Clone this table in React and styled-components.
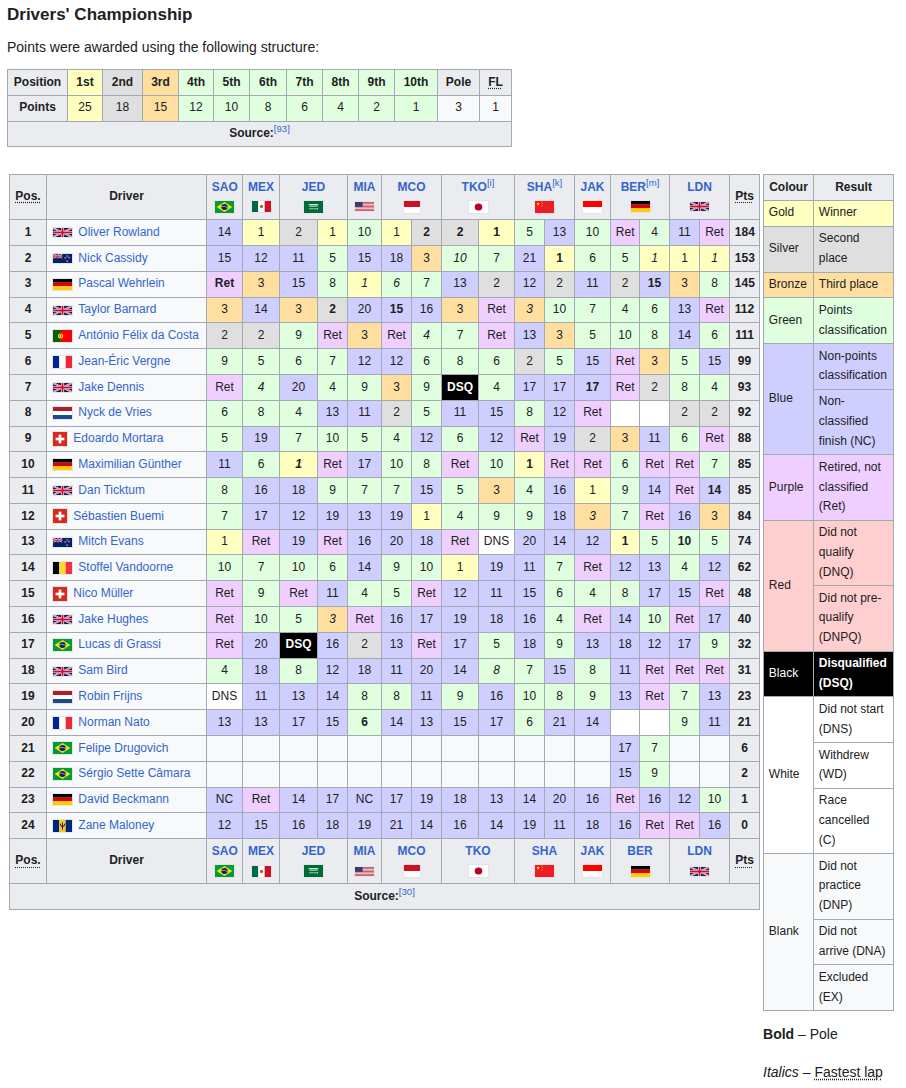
import React from 'react';
import styled, { createGlobalStyle } from 'styled-components';

const GOLD = '#ffffbf';
const SILVER = '#dfdfdf';
const BRONZE = '#ffdf9f';
const GREEN = '#dfffdf';
const BLUE = '#cfcfff';
const PURPLE = '#efcfff';
const RED = '#ffcfcf';
const BLACK = '#000000';
const WHITE = '#ffffff';
const BLANK = '#f8f9fa';

const GlobalStyle = createGlobalStyle`
	body {
		margin: 0;
		background: #ffffff;
		color: #202122;
		font-family: "Liberation Sans", Arial, sans-serif;
	}
`;

const Page = styled.div`
	padding: 4px 0 0 7px;
`;

const Heading = styled.h3`
	margin: 0;
	font-size: 17px;
	line-height: 22px;
	font-weight: bold;
`;

const Intro = styled.p`
	margin: 10px 0 0;
	font-size: 14px;
	line-height: 22.4px;
`;

const WikiTable = styled.table`
	border-collapse: collapse;
	table-layout: fixed;
	width: ${p => p.$width}px;
	margin-top: ${p => p.$top || 0}px;
	background: #f8f9fa;
	border: 1px solid #a2a9b1;
	font-size: 12px;
	line-height: ${p => p.$line || 19.6}px;
	color: #202122;
`;

const Th = styled.th`
	background: ${p => p.$bg || '#eaecf0'};
	border: 1px solid #a2a9b1;
	padding: 2.6px 4.8px;
	font-weight: bold;
	text-align: center;
	white-space: nowrap;
`;

const Td = styled.td`
	background: ${p => p.$bg || 'transparent'};
	color: ${p => p.$fg || '#202122'};
	border: 1px solid #a2a9b1;
	padding: 2.6px 4.8px;
	text-align: ${p => p.$align || 'center'};
	font-weight: ${p => (p.$bold ? 'bold' : 'normal')};
	font-style: ${p => (p.$italic ? 'italic' : 'normal')};
	white-space: nowrap;
	overflow: hidden;
`;

const Link = styled.a`
	color: #3366cc;
	text-decoration: none;
	cursor: pointer;
`;

const Ref = styled.sup`
	color: #3366cc;
	font-size: 80%;
	font-weight: normal;
	line-height: 1;
	vertical-align: super;
`;

const Abbr = styled.span`
	text-decoration: underline dotted;
	text-underline-offset: 2px;
`;

const Layout = styled.div`
	display: flex;
	align-items: flex-start;
	gap: 3px;
	margin: 26.6px 0 0 2px;
`;

const Side = styled.div`
	display: flex;
	flex-direction: column;
`;

const Note = styled.p`
	margin: ${p => p.$top}px 0 0;
	font-size: 14px;
	line-height: 22.4px;
`;

const FlagSvg = styled.svg`
	display: inline-block;
	vertical-align: middle;
	border: 1px solid #e2e4e8;
	margin-right: ${p => p.$gap || 0}px;
`;

const star = (cx, cy, r) => {
	const pts = [];
	for (let i = 0; i < 10; i++) {
		const a = -Math.PI / 2 + (i * Math.PI) / 5;
		const rr = i % 2 === 0 ? r : r * 0.4;
		pts.push(`${(cx + rr * Math.cos(a)).toFixed(2)},${(cy + rr * Math.sin(a)).toFixed(2)}`);
	}
	return pts.join(' ');
};

const UnionJack = () => (
	<g>
		<rect width="60" height="30" fill="#012169" />
		<path d="M0,0 L60,30 M60,0 L0,30" stroke="#fff" strokeWidth="6" />
		<path d="M0,0 L60,30 M60,0 L0,30" stroke="#C8102E" strokeWidth="2" />
		<path d="M30,0 V30 M0,15 H60" stroke="#fff" strokeWidth="10" />
		<path d="M30,0 V30 M0,15 H60" stroke="#C8102E" strokeWidth="6" />
	</g>
);

const flags = {
	gb: { size: [21, 11], box: '0 0 60 30', art: <UnionJack /> },
	nz: {
		size: [21, 11],
		box: '0 0 60 30',
		art: (
			<g>
				<rect width="60" height="30" fill="#012169" />
				<svg x="0" y="0" width="30" height="15" viewBox="0 0 60 30">
					<UnionJack />
				</svg>
				{[[45, 7], [39, 13], [51, 12], [45, 24]].map(([x, y]) => (
					<polygon key={x + '-' + y} points={star(x, y, 3)} fill="#C8102E" stroke="#fff" strokeWidth="0.8" />
				))}
			</g>
		),
	},
	de: {
		size: [21, 13],
		box: '0 0 5 3',
		art: (
			<g>
				<rect width="5" height="1" fill="#000" />
				<rect y="1" width="5" height="1" fill="#DD0000" />
				<rect y="2" width="5" height="1" fill="#FFCE00" />
			</g>
		),
	},
	pt: {
		size: [21, 14],
		box: '0 0 30 20',
		art: (
			<g>
				<rect width="30" height="20" fill="#FF0000" />
				<rect width="12" height="20" fill="#006600" />
				<circle cx="12" cy="10" r="4.2" fill="#FFE000" />
				<circle cx="12" cy="10" r="2.4" fill="#FF0000" />
				<rect x="11" y="8.6" width="2" height="2.8" fill="#fff" />
			</g>
		),
	},
	fr: {
		size: [21, 14],
		box: '0 0 3 2',
		art: (
			<g>
				<rect width="1" height="2" fill="#002395" />
				<rect x="1" width="1" height="2" fill="#fff" />
				<rect x="2" width="1" height="2" fill="#ED2939" />
			</g>
		),
	},
	nl: {
		size: [21, 14],
		box: '0 0 9 6',
		art: (
			<g>
				<rect width="9" height="2" fill="#AE1C28" />
				<rect y="2" width="9" height="2" fill="#fff" />
				<rect y="4" width="9" height="2" fill="#21468B" />
			</g>
		),
	},
	ch: {
		size: [16, 16],
		box: '0 0 32 32',
		art: (
			<g>
				<rect width="32" height="32" fill="#DA291C" />
				<rect x="13" y="6" width="6" height="20" fill="#fff" />
				<rect x="6" y="13" width="20" height="6" fill="#fff" />
			</g>
		),
	},
	be: {
		size: [21, 14],
		box: '0 0 3 2',
		art: (
			<g>
				<rect width="1" height="2" fill="#000" />
				<rect x="1" width="1" height="2" fill="#FDDA24" />
				<rect x="2" width="1" height="2" fill="#EF3340" />
			</g>
		),
	},
	br: {
		size: [21, 14],
		box: '0 0 20 14',
		art: (
			<g>
				<rect width="20" height="14" fill="#009C3B" />
				<polygon points="1.7,7 10,1.2 18.3,7 10,12.8" fill="#FFDF00" />
				<circle cx="10" cy="7" r="3.4" fill="#002776" />
				<path d="M6.8,6.3 Q10,5.6 13.2,7.6" stroke="#fff" strokeWidth="0.6" fill="none" />
			</g>
		),
	},
	bb: {
		size: [21, 14],
		box: '0 0 30 20',
		art: (
			<g>
				<rect width="10" height="20" fill="#00267F" />
				<rect x="10" width="10" height="20" fill="#FFC726" />
				<rect x="20" width="10" height="20" fill="#00267F" />
				<path d="M15,4 V16 M11.5,6 Q11.5,11 15,11 Q18.5,11 18.5,6" stroke="#000" strokeWidth="1.3" fill="none" />
			</g>
		),
	},
	mx: {
		size: [21, 13],
		box: '0 0 21 12',
		art: (
			<g>
				<rect width="7" height="12" fill="#006847" />
				<rect x="7" width="7" height="12" fill="#fff" />
				<rect x="14" width="7" height="12" fill="#CE1126" />
				<circle cx="10.5" cy="6" r="1.8" fill="#8C6A3A" />
			</g>
		),
	},
	sa: {
		size: [21, 14],
		box: '0 0 30 20',
		art: (
			<g>
				<rect width="30" height="20" fill="#006C35" />
				<path d="M8,6 H22 M9,8.5 H21" stroke="#fff" strokeWidth="1.4" strokeLinecap="round" />
				<path d="M8,13 H21.5" stroke="#fff" strokeWidth="1" />
				<rect x="20.5" y="12.2" width="1.5" height="1.6" fill="#fff" />
			</g>
		),
	},
	us: {
		size: [21, 11],
		box: '0 0 38 20',
		art: (
			<g>
				<rect width="38" height="20" fill="#fff" />
				{Array.from({ length: 7 }).map((_, i) => (
					<rect key={i} y={(i * 2 * 20) / 13} width="38" height={20 / 13} fill="#B22234" />
				))}
				<rect width="15.2" height={(20 * 7) / 13} fill="#3C3B6E" />
			</g>
		),
	},
	mc: {
		size: [18, 14],
		box: '0 0 5 4',
		art: (
			<g>
				<rect width="5" height="2" fill="#CE1126" />
				<rect y="2" width="5" height="2" fill="#fff" />
			</g>
		),
	},
	id: {
		size: [21, 14],
		box: '0 0 3 2',
		art: (
			<g>
				<rect width="3" height="1" fill="#FF0000" />
				<rect y="1" width="3" height="1" fill="#fff" />
			</g>
		),
	},
	jp: {
		size: [21, 14],
		box: '0 0 3 2',
		art: (
			<g>
				<rect width="3" height="2" fill="#fff" />
				<circle cx="1.5" cy="1" r="0.6" fill="#BC002D" />
			</g>
		),
	},
	cn: {
		size: [21, 14],
		box: '0 0 30 20',
		art: (
			<g>
				<rect width="30" height="20" fill="#EE1C25" />
				<polygon points={star(5, 5, 3)} fill="#FFFF00" />
				<polygon points={star(10, 2, 1)} fill="#FFFF00" />
				<polygon points={star(12, 4, 1)} fill="#FFFF00" />
				<polygon points={star(12, 7, 1)} fill="#FFFF00" />
				<polygon points={star(10, 9, 1)} fill="#FFFF00" />
			</g>
		),
	},
};

// size is the outer box, the 1px frame included
const Flag = ({ code, gap }) => {
	const f = flags[code];
	return (
		<FlagSvg width={f.size[0] - 2} height={f.size[1] - 2} viewBox={f.box} preserveAspectRatio="none" $gap={gap}>
			{f.art}
		</FlagSvg>
	);
};

const pointsScale = [
	['1st', '25', GOLD],
	['2nd', '18', SILVER],
	['3rd', '15', BRONZE],
	['4th', '12', GREEN],
	['5th', '10', GREEN],
	['6th', '8', GREEN],
	['7th', '6', GREEN],
	['8th', '4', GREEN],
	['9th', '2', GREEN],
	['10th', '1', GREEN],
];

const pointsCols = [60, 35, 40, 36, 35, 36, 37, 36, 36, 36, 43, 42, 32];

const races = [
	{ code: 'SAO', flag: 'br', span: 1 },
	{ code: 'MEX', flag: 'mx', span: 1 },
	{ code: 'JED', flag: 'sa', span: 2 },
	{ code: 'MIA', flag: 'us', span: 1 },
	{ code: 'MCO', flag: 'mc', span: 2 },
	{ code: 'TKO', flag: 'jp', span: 2, note: 'i' },
	{ code: 'SHA', flag: 'cn', span: 2, note: 'k' },
	{ code: 'JAK', flag: 'id', span: 1 },
	{ code: 'BER', flag: 'de', span: 2, note: 'm' },
	{ code: 'LDN', flag: 'gb', span: 2 },
];

const mainCols = [37, 160, 36, 37, 38, 30, 34, 30, 30, 37, 36, 30, 30, 36, 29, 30, 30, 30, 30];

const E = ['', '', '', '', '', '', '', '', '', '', '', ''];

const drivers = [
	[1, 'gb', 'Oliver Rowland', ['14', '1', '2', '1', '10', '1', '2*', '2*', '1*', '5', '13', '10', 'Ret', '4', '11', 'Ret'], 184],
	[2, 'nz', 'Nick Cassidy', ['15', '12', '11', '5', '15', '18', '3', "10'", '7', '21', '1*', '6', '5', "1'", '1', "1'"], 153],
	[3, 'de', 'Pascal Wehrlein', ['Ret*', '3', '15', '8', "1'", "6'", '7', '13', '2', '12', '2', '11', '2', '15*', '3', '8'], 145],
	[4, 'gb', 'Taylor Barnard', ['3', '14', '3', '2*', '20', '15*', '16', '3', 'Ret', "3'", '10', '7', '4', '6', '13', 'Ret'], 112],
	[5, 'pt', 'António Félix da Costa', ['2', '2', '9', 'Ret', '3', 'Ret', "4'", '7', 'Ret', '13', '3', '5', '10', '8', '14', '6'], 111],
	[6, 'fr', 'Jean-Éric Vergne', ['9', '5', '6', '7', '12', '12', '6', '8', '6', '2', '5', '15', 'Ret', '3', '5', '15'], 99],
	[7, 'gb', 'Jake Dennis', ['Ret', "4'", '20', '4', '9', '3', '9', 'DSQ', '4', '17', '17', '17*', 'Ret', '2', '8', '4'], 93],
	[8, 'nl', 'Nyck de Vries', ['6', '8', '4', '13', '11', '2', '5', '11', '15', '8', '12', 'Ret', '-', '-', '2', '2'], 92],
	[9, 'ch', 'Edoardo Mortara', ['5', '19', '7', '10', '5', '4', '12', '6', '12', 'Ret', '19', '2', '3', '11', '6', 'Ret'], 88],
	[10, 'de', 'Maximilian Günther', ['11', '6', "1*'", 'Ret', '17', '10', '8', 'Ret', '10', '1*', 'Ret', 'Ret', '6', 'Ret', 'Ret', '7'], 85],
	[11, 'gb', 'Dan Ticktum', ['8', '16', '18', '9', '7', '7', '15', '5', '3', '4', '16', '1', '9', '14', 'Ret', '14*'], 85],
	[12, 'ch', 'Sébastien Buemi', ['7', '17', '12', '19', '13', '19', '1', '4', '9', '9', '18', "3'", '7', 'Ret', '16', '3'], 84],
	[13, 'nz', 'Mitch Evans', ['1', 'Ret', '19', 'Ret', '16', '20', '18', 'Ret', 'DNS', '20', '14', '12', '1*', '5', '10*', '5'], 74],
	[14, 'be', 'Stoffel Vandoorne', ['10', '7', '10', '6', '14', '9', '10', '1', '19', '11', '7', 'Ret', '12', '13', '4', '12'], 62],
	[15, 'ch', 'Nico Müller', ['Ret', '9', 'Ret', '11', '4', '5', 'Ret', '12', '11', '15', '6', '4', '8', '17', '15', 'Ret'], 48],
	[16, 'gb', 'Jake Hughes', ['Ret', '10', '5', "3'", 'Ret', '16', '17', '19', '18', '16', '4', 'Ret', '14', '10', 'Ret', '17'], 40],
	[17, 'br', 'Lucas di Grassi', ['Ret', '20', 'DSQ', '16', '2', '13', 'Ret', '17', '5', '18', '9', '13', '18', '12', '17', '9'], 32],
	[18, 'gb', 'Sam Bird', ['4', '18', '8', '12', '18', '11', '20', '14', "8'", '7', '15', '8', '11', 'Ret', 'Ret', 'Ret'], 31],
	[19, 'nl', 'Robin Frijns', ['DNS', '11', '13', '14', '8', '8', '11', '9', '16', '10', '8', '9', '13', 'Ret', '7', '13'], 23],
	[20, 'fr', 'Norman Nato', ['13', '13', '17', '15', '6*', '14', '13', '15', '17', '6', '21', '14', '-', '-', '9', '11'], 21],
	[21, 'br', 'Felipe Drugovich', [...E, '17', '7', '', ''], 6],
	[22, 'br', 'Sérgio Sette Câmara', [...E, '15', '9', '', ''], 2],
	[23, 'de', 'David Beckmann', ['NC', 'Ret', '14', '17', 'NC', '17', '19', '18', '13', '14', '20', '16', 'Ret', '16', '12', '10'], 1],
	[24, 'bb', 'Zane Maloney', ['12', '15', '16', '18', '19', '21', '14', '16', '14', '19', '11', '18', '16', 'Ret', 'Ret', '16'], 0],
];

const parseResult = raw => {
	let text = raw;
	let italic = false;
	let bold = false;
	if (text.endsWith("'")) {
		italic = true;
		text = text.slice(0, -1);
	}
	if (text.endsWith('*')) {
		bold = true;
		text = text.slice(0, -1);
	}
	let bg;
	let fg;
	if (text === '') bg = undefined;
	else if (text === '-') {
		bg = WHITE;
		text = '';
	} else if (text === 'Ret') bg = PURPLE;
	else if (text === 'DSQ') {
		bg = BLACK;
		fg = '#ffffff';
		bold = true;
	} else if (text === 'DNS') bg = WHITE;
	else if (text === 'NC') bg = BLUE;
	else {
		const n = Number(text);
		if (n === 1) bg = GOLD;
		else if (n === 2) bg = SILVER;
		else if (n === 3) bg = BRONZE;
		else if (n <= 10) bg = GREEN;
		else bg = BLUE;
	}
	return { text, bold, italic, bg, fg };
};

const legend = [
	{ label: 'Gold', bg: GOLD, items: [['Winner']] },
	{ label: 'Silver', bg: SILVER, items: [['Second', 'place']] },
	{ label: 'Bronze', bg: BRONZE, items: [['Third place']] },
	{ label: 'Green', bg: GREEN, items: [['Points', 'classification']] },
	{ label: 'Blue', bg: BLUE, items: [['Non-points', 'classification'], ['Non-', 'classified', 'finish (NC)']] },
	{ label: 'Purple', bg: PURPLE, items: [['Retired, not', 'classified', '(Ret)']] },
	{ label: 'Red', bg: RED, items: [['Did not', 'qualify', '(DNQ)'], ['Did not pre-', 'qualify', '(DNPQ)']] },
	{ label: 'Black', bg: BLACK, fg: '#ffffff', strong: true, items: [['Disqualified', '(DSQ)']] },
	{ label: 'White', bg: WHITE, items: [['Did not start', '(DNS)'], ['Withdrew', '(WD)'], ['Race', 'cancelled', '(C)']] },
	{ label: 'Blank', bg: BLANK, items: [['Did not', 'practice', '(DNP)'], ['Did not', 'arrive (DNA)'], ['Excluded', '(EX)']] },
];

const RaceHeader = ({ withNotes }) => (
	<tr>
		<Th>
			<Abbr>Pos.</Abbr>
		</Th>
		<Th>Driver</Th>
		{races.map(r => (
			<Th key={r.code} colSpan={r.span}>
				<Link>{r.code}</Link>
				{withNotes && r.note && <Ref>[{r.note}]</Ref>}
				<br />
				<Flag code={r.flag} />
			</Th>
		))}
		<Th>
			<Abbr>Pts</Abbr>
		</Th>
	</tr>
);

const Lines = ({ lines }) =>
	lines.map((l, i) => (
		<React.Fragment key={i}>
			{i > 0 && <br />}
			{l}
		</React.Fragment>
	));

const App = () => (
	<Page>
		<GlobalStyle />
		<Heading>Drivers' Championship</Heading>
		<Intro>Points were awarded using the following structure:</Intro>

		<WikiTable $width={504} $top={10.6}>
			<colgroup>
				{pointsCols.map((w, i) => (
					<col key={i} style={{ width: w }} />
				))}
			</colgroup>
			<tbody>
				<tr>
					<Th>Position</Th>
					{pointsScale.map(([pos, , bg]) => (
						<Th key={pos} $bg={bg}>
							{pos}
						</Th>
					))}
					<Th>Pole</Th>
					<Th>
						<Abbr>FL</Abbr>
					</Th>
				</tr>
				<tr>
					<Th>Points</Th>
					{pointsScale.map(([pos, pts, bg]) => (
						<Td key={pos} $bg={bg}>
							{pts}
						</Td>
					))}
					<Td>3</Td>
					<Td>1</Td>
				</tr>
				<tr>
					<Th colSpan={13}>
						Source:<Ref>[93]</Ref>
					</Th>
				</tr>
			</tbody>
		</WikiTable>

		<Layout>
			<WikiTable $width={750}>
				<colgroup>
					{mainCols.map((w, i) => (
						<col key={i} style={{ width: w }} />
					))}
				</colgroup>
				<tbody>
					<RaceHeader withNotes />
					{drivers.map(([pos, flag, name, results, pts]) => (
						<tr key={pos}>
							<Th>{pos}</Th>
							<Td $align="left">
								<Flag code={flag} gap={5.5} />
								<Link>{name}</Link>
							</Td>
							{results.map((raw, i) => {
								const r = parseResult(raw);
								return (
									<Td key={i} $bg={r.bg} $fg={r.fg} $bold={r.bold} $italic={r.italic}>
										{r.text}
									</Td>
								);
							})}
							<Th>{pts}</Th>
						</tr>
					))}
					<RaceHeader />
					<tr>
						<Th colSpan={19}>
							Source:<Ref>[30]</Ref>
						</Th>
					</tr>
				</tbody>
			</WikiTable>

			<Side>
				<WikiTable $width={130} $line={19.75}>
					<colgroup>
						<col style={{ width: 50 }} />
						<col style={{ width: 80 }} />
					</colgroup>
					<tbody>
						<tr>
							<Th>Colour</Th>
							<Th>Result</Th>
						</tr>
						{legend.map(g =>
							g.items.map((lines, i) => (
								<tr key={g.label + i}>
									{i === 0 && (
										<Td rowSpan={g.items.length} $align="left" $bg={g.bg} $fg={g.fg}>
											{g.label}
										</Td>
									)}
									<Td $align="left" $bg={g.bg} $fg={g.fg} $bold={g.strong}>
										<Lines lines={lines} />
									</Td>
								</tr>
							))
						)}
					</tbody>
				</WikiTable>
				<Note $top={12}>
					<b>Bold</b> – Pole
				</Note>
				<Note $top={15.6}>
					<i>Italics</i> – <Abbr>Fastest lap</Abbr>
				</Note>
			</Side>
		</Layout>
	</Page>
);

export default App;
